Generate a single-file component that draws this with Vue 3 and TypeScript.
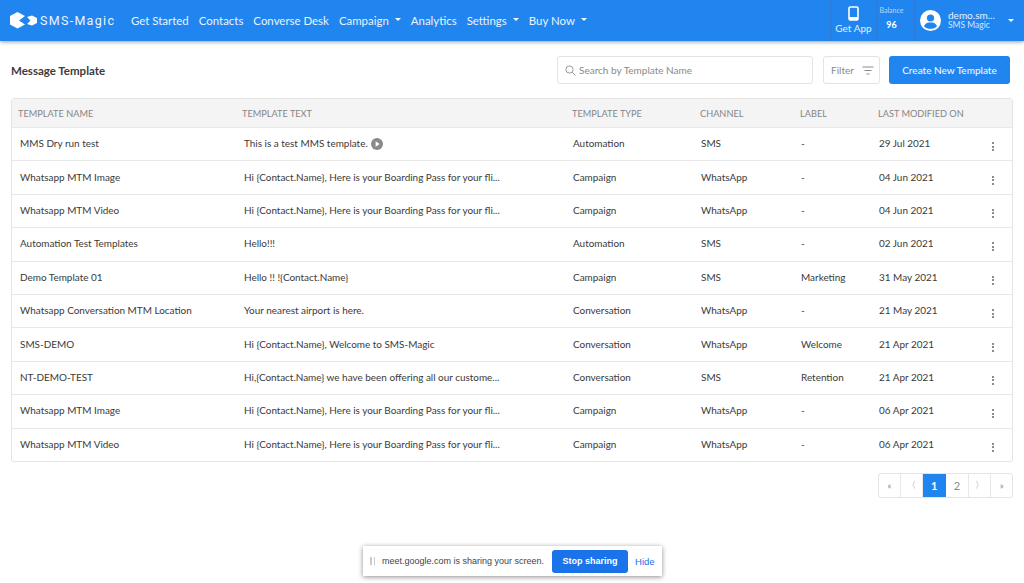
<script setup lang="ts">
interface Row { name: string; text: string; type: string; channel: string; label: string; date: string; play?: boolean }
const boarding = 'Hi {Contact.Name}, Here is your Boarding Pass for your fli...'
const rows: Row[] = [
  { name: 'MMS Dry run test', text: 'This is a test MMS template.', type: 'Automation', channel: 'SMS', label: '-', date: '29 Jul 2021', play: true },
  { name: 'Whatsapp MTM Image', text: boarding, type: 'Campaign', channel: 'WhatsApp', label: '-', date: '04 Jun 2021' },
  { name: 'Whatsapp MTM Video', text: boarding, type: 'Campaign', channel: 'WhatsApp', label: '-', date: '04 Jun 2021' },
  { name: 'Automation Test Templates', text: 'Hello!!!', type: 'Automation', channel: 'SMS', label: '-', date: '02 Jun 2021' },
  { name: 'Demo Template 01', text: 'Hello !! !{Contact.Name}', type: 'Campaign', channel: 'SMS', label: 'Marketing', date: '31 May 2021' },
  { name: 'Whatsapp Conversation MTM Location', text: 'Your nearest airport is here.', type: 'Conversation', channel: 'WhatsApp', label: '-', date: '21 May 2021' },
  { name: 'SMS-DEMO', text: 'Hi {Contact.Name}, Welcome to SMS-Magic', type: 'Conversation', channel: 'WhatsApp', label: 'Welcome', date: '21 Apr 2021' },
  { name: 'NT-DEMO-TEST', text: 'Hi,{Contact.Name} we have been offering all our custome...', type: 'Conversation', channel: 'SMS', label: 'Retention', date: '21 Apr 2021' },
  { name: 'Whatsapp MTM Image', text: boarding, type: 'Campaign', channel: 'WhatsApp', label: '-', date: '06 Apr 2021' },
  { name: 'Whatsapp MTM Video', text: boarding, type: 'Campaign', channel: 'WhatsApp', label: '-', date: '06 Apr 2021' },
]
const navItems = [
  { t: 'Get Started' }, { t: 'Contacts' }, { t: 'Converse Desk' }, { t: 'Campaign', caret: true },
  { t: 'Analytics' }, { t: 'Settings', caret: true }, { t: 'Buy Now', caret: true },
]
const headers = ['TEMPLATE NAME', 'TEMPLATE TEXT', 'TEMPLATE TYPE', 'CHANNEL', 'LABEL', 'LAST MODIFIED ON', '']
const pages = ['«', '〈', '1', '2', '〉', '»']
</script>

<template>
  <div class="page">
    <header class="nav">
      <div class="brand">
        <svg class="logo" width="27" height="17" viewBox="0 0 27 17">
          <path d="M0 4 L7.5 0 L15 4 L9 8.5 L15 12.5 L7.5 16.5 L0 12.5 Z" fill="#fff" />
          <path d="M17 5 L22 3.5 L27 6 L27 11 L22 13.5 L17 12 L20.5 8.5 Z" fill="#fff" />
        </svg>
        <span class="brand-text">SMS-Magic</span>
      </div>
      <nav class="links">
        <a v-for="n in navItems" :key="n.t" class="link">{{ n.t }}<i v-if="n.caret" class="caret" /></a>
      </nav>
      <div class="right">
        <div class="get-app">
          <svg width="11" height="15" viewBox="0 0 11 15">
            <rect x="1" y="1" width="9" height="13" rx="1.2" fill="none" stroke="#fff" stroke-width="1.6" />
            <rect x="1" y="11" width="9" height="3" fill="#fff" />
          </svg>
          <span>Get App</span>
        </div>
        <div class="balance">
          <span class="bal-label">Balance</span>
          <span class="bal-value">96</span>
        </div>
        <div class="user">
          <svg width="21" height="21" viewBox="0 0 21 21">
            <circle cx="10.5" cy="10.5" r="10.5" fill="#fff" />
            <circle cx="10.5" cy="8" r="3.6" fill="#2185ef" />
            <path d="M4 16.2 C5.5 13 8 12.6 10.5 12.6 C13 12.6 15.5 13 17 16.2 C15.5 18 13 18.8 10.5 18.8 C8 18.8 5.5 18 4 16.2 Z" fill="#2185ef" />
          </svg>
          <div class="user-text">
            <span class="user-name">demo.sm...</span>
            <span class="user-org">SMS Magic</span>
          </div>
          <i class="caret user-caret" />
        </div>
      </div>
    </header>

    <main class="content">
      <div class="toolbar">
        <h1 class="title">Message Template</h1>
        <div class="search">
          <svg width="11" height="11" viewBox="0 0 11 11">
            <circle cx="4.5" cy="4.5" r="3.6" fill="none" stroke="#9a9a9a" stroke-width="1" />
            <line x1="7.2" y1="7.2" x2="10.4" y2="10.4" stroke="#9a9a9a" stroke-width="1" />
          </svg>
          <span>Search by Template Name</span>
        </div>
        <div class="filter">
          <span>Filter</span>
          <svg width="12" height="9" viewBox="0 0 12 9">
            <path d="M0.5 1H11.5M2.5 4.5H9.5M4.5 8H7.5" stroke="#8c8c8c" stroke-width="1" fill="none" />
          </svg>
        </div>
        <button class="create">Create New Template</button>
      </div>

      <div class="table">
        <div class="row head">
          <div v-for="(h, i) in headers" :key="i" class="cell">{{ h }}</div>
        </div>
        <div v-for="(r, i) in rows" :key="i" class="row body">
          <div class="cell">{{ r.name }}</div>
          <div class="cell text-cell">
            {{ r.text }}
            <svg v-if="r.play" class="play" width="12" height="12" viewBox="0 0 13 13">
              <circle cx="6.5" cy="6.5" r="6.5" fill="#8a8a8a" />
              <path d="M5 3.6 L9.4 6.5 L5 9.4 Z" fill="#fff" />
            </svg>
          </div>
          <div class="cell">{{ r.type }}</div>
          <div class="cell">{{ r.channel }}</div>
          <div class="cell">{{ r.label }}</div>
          <div class="cell">{{ r.date }}</div>
          <div class="kebab"><i /><i /><i /></div>
        </div>
      </div>

      <div class="pager">
        <span v-for="p in pages" :key="p" class="pg" :class="{ active: p === '1', num: p === '2' || p === '1' }">{{ p }}</span>
      </div>
    </main>

    <div class="share">
      <span class="grip"><i /><i /></span>
      <span class="share-msg">meet.google.com is sharing your screen.</span>
      <button class="stop">Stop sharing</button>
      <a class="hide">Hide</a>
    </div>
  </div>
</template>

<style>
html, body { margin: 0; background: #fff; }
</style>

<style scoped>
.page {
  position: relative;
  width: 1024px;
  height: 583px;
  overflow: hidden;
  background: #fff;
  font-family: Lato, "Liberation Sans", sans-serif;
  color: #3a3a3a;
}
.nav {
  height: 41px;
  background: #2185ef;
  box-shadow: 0 1px 4px rgba(0, 0, 0, 0.4);
  display: flex;
  align-items: center;
  color: #fff;
  padding-left: 10px;
  box-sizing: border-box;
}
.brand { display: flex; align-items: center; gap: 3px; width: 121px; flex: none; }
.logo { flex: none; }
.brand-text {
  font-family: Roboto, sans-serif;
  font-size: 12.5px;
  letter-spacing: 1.3px;
  font-weight: 400;
  white-space: nowrap;
  color: #eaf3fe;
}
.links { display: flex; gap: 10px; font-size: 11.45px; }
.link { display: inline-flex; align-items: center; white-space: nowrap; color: #eaf3fe; }
.caret {
  display: inline-block;
  margin-left: 6px;
  margin-top: -3px;
  border-left: 3.5px solid transparent;
  border-right: 3.5px solid transparent;
  border-top: 3.5px solid #fff;
}
.right { margin-left: auto; display: flex; height: 41px; align-items: stretch; }
.get-app {
  width: 46px;
  border-left: 1px solid #2a7cd8;
  display: flex;
  flex-direction: column;
  align-items: center;
  justify-content: center;
  gap: 1px;
  font-size: 10px;
  line-height: 13px;
  color: #e4f0fd;
  box-sizing: border-box;
}
.balance {
  width: 38px;
  border-left: 1px solid #2a7cd8;
  display: flex;
  flex-direction: column;
  align-items: center;
  padding: 6px 8px 0 0;
  box-sizing: border-box;
}
.bal-label { font-size: 7px; color: #b9d8fa; line-height: 9px; }
.bal-value { font-size: 9px; font-weight: 700; margin-top: 4px; line-height: 11px; }
.user {
  width: 110px;
  border-left: 1px solid #2a7cd8;
  display: flex;
  align-items: center;
  box-sizing: border-box;
  padding-left: 5px;
}
.user-text { display: flex; flex-direction: column; margin: -1px 0 0 7px; line-height: 10px; }
.user-name { font-size: 10px; color: #e8f2fe; }
.user-org { font-size: 8.5px; color: #d3e6fc; }
.user-caret { margin-left: 13px; margin-top: -1px; }

.content { padding: 15px 11px 0; }
.toolbar { display: flex; align-items: center; height: 28px; padding-right: 3px; }
.title { font-size: 11.5px; font-weight: 700; margin: 0; color: #3c3c3c; flex: 1; }
.search {
  width: 256px;
  height: 28px;
  box-sizing: border-box;
  border: 1px solid #e3e3e3;
  border-radius: 3px;
  display: flex;
  align-items: center;
  gap: 3px;
  padding-left: 7px;
  font-size: 10px;
  color: #8a8a8a;
}
.filter {
  width: 57px;
  height: 28px;
  margin-left: 10px;
  box-sizing: border-box;
  border: 1px solid #e3e3e3;
  border-radius: 3px;
  display: flex;
  align-items: center;
  gap: 8px;
  padding-left: 7px;
  font-size: 10px;
  color: #8a8a8a;
}
.create {
  width: 121px;
  height: 28px;
  margin-left: 9px;
  border: 0;
  border-radius: 3px;
  background: #2185ef;
  color: #eef6ff;
  font: 500 10px Lato, sans-serif;
}
.table {
  margin-top: 14px;
  border: 1px solid #e4e4e4;
  border-radius: 3px;
  width: 1002px;
  box-sizing: border-box;
}
.row {
  display: grid;
  grid-template-columns: 224px 329px 128px 100px 78px 100px 1fr;
  align-items: center;
  white-space: nowrap;
}
.head {
  height: 28px;
  background: #f4f4f4;
  padding-left: 6px;
  grid-template-columns: 224px 330px 128px 100px 78px 100px 1fr;
  font-size: 9.2px;
  color: #858585;
}
.body {
  height: 33.4px;
  padding-left: 8px;
  padding-bottom: 2px;
  border-top: 1px solid #e8e8e8;
  box-sizing: border-box;
  font-size: 9.95px;
  color: #3a3a3a;
}
.text-cell { display: flex; align-items: center; gap: 3px; }
.play { margin-top: 1px; flex: none; }
.kebab { display: flex; flex-direction: column; align-items: center; gap: 1.5px; padding-top: 7px; padding-right: 6px; }
.kebab i { width: 2px; height: 2px; border-radius: 50%; background: #666; }
.pager {
  margin-top: 11px;
  margin-left: auto;
  width: 135px;
  height: 25px;
  display: flex;
  border: 1px solid #e4e4e4;
  border-radius: 3px;
  box-sizing: border-box;
}
.pg {
  flex: 1;
  display: flex;
  align-items: center;
  justify-content: center;
  font-size: 9px;
  color: #8a8a8a;
  border-right: 1px solid #e8e8e8;
}
.pg:last-child { border-right: 0; }
.pg.num { font-size: 11px; flex: 1.1; }
.pg.active { background: #2185ef; color: #fff; font-weight: 700; border-right: 0; }
.share {
  position: absolute;
  left: 363px;
  top: 546px;
  width: 299px;
  height: 30px;
  box-sizing: border-box;
  background: #fff;
  box-shadow: 0 1px 5px rgba(0, 0, 0, 0.45);
  display: flex;
  align-items: center;
  padding-left: 7px;
  font-family: "Liberation Sans", Arial, sans-serif;
  font-size: 9px;
  color: #444;
}
.grip { display: flex; gap: 2px; }
.grip i { width: 1.5px; height: 8px; background: #ccc; }
.share-msg { margin-left: 7px; white-space: nowrap; }
.stop {
  margin-left: 8px;
  width: 76px;
  height: 23px;
  border: 0;
  border-radius: 3px;
  background: #1a73e8;
  color: #fff;
  font: 700 9px "Liberation Sans", Arial, sans-serif;
}
.hide { margin-left: 7px; color: #1a73e8; font-size: 9.5px; }
</style>
